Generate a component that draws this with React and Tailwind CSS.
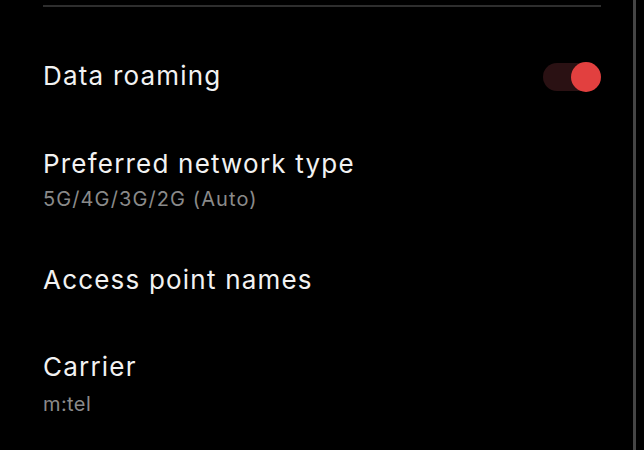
export default function App() {
  return (
    <div className="flex w-[644px] h-[450px] overflow-hidden bg-black font-['Inter','Liberation_Sans',sans-serif]">

      {/* SETTINGS LIST */}
      <div className="flex-1 flex flex-col pl-[43px] pr-[32px]">
        <div className="mt-[5px] h-[2px] bg-[#2e2e2e]" />

        {/* DATA ROAMING */}
        <div className="mt-[53px] flex items-center justify-between">
          <span className="text-[26px] leading-[32px] tracking-[1.2px] text-[#f2f2f2]">
            Data roaming
          </span>
          <button className="relative w-[58px] h-[30px] mt-[2px] flex items-center">
            <span className="absolute left-0 right-[1px] h-[28px] rounded-full bg-[#2a1113]" />
            <span className="absolute right-0 w-[30px] h-[30px] rounded-full bg-[#e2403f]" />
          </button>
        </div>

        {/* PREFERRED NETWORK TYPE */}
        <div className="mt-[56px] flex flex-col">
          <span className="text-[26px] leading-[32px] tracking-[1.2px] text-[#f2f2f2]">
            Preferred network type
          </span>
          <span className="mt-[7px] text-[20px] leading-[24px] tracking-[1.1px] text-[#8a8a8a]">
            5G/4G/3G/2G (Auto)
          </span>
        </div>

        {/* ACCESS POINT NAMES */}
        <div className="mt-[53px]">
          <span className="text-[26px] leading-[32px] tracking-[1.2px] text-[#f2f2f2]">
            Access point names
          </span>
        </div>

        {/* CARRIER */}
        <div className="mt-[55px] flex flex-col">
          <span className="text-[26px] leading-[32px] tracking-[1.2px] text-[#f2f2f2]">
            Carrier
          </span>
          <span className="mt-[9px] text-[20px] leading-[24px] tracking-[0.4px] text-[#8a8a8a]">
            m:tel
          </span>
        </div>
      </div>

      {/* SCROLL EDGE */}
      <div className="w-[3px] h-full bg-[#464646] mr-[8px]" />
    </div>
  );
}
